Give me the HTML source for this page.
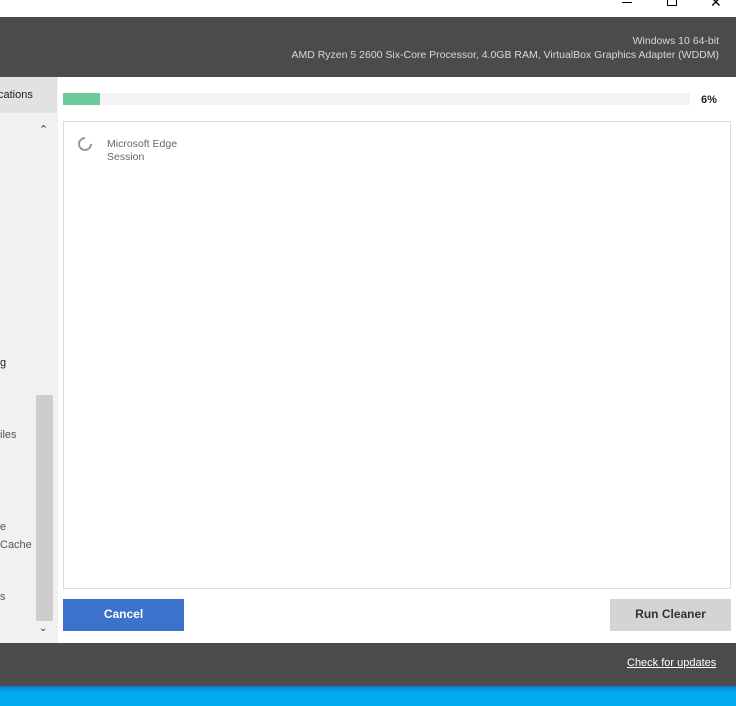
<!DOCTYPE html>
<html><head><style>
*{margin:0;padding:0;box-sizing:border-box}
body{width:736px;height:706px;overflow:hidden;background:#fff;font-family:"Liberation Sans",sans-serif;position:relative}
.a{position:absolute}
</style></head><body>
<div class="a" style="left:0;top:0;width:736px;height:17px;background:#fff"></div>
<div class="a" style="left:622px;top:2px;width:10px;height:1px;background:#000"></div>
<div class="a" style="left:667px;top:-4px;width:10px;height:10px;border:1px solid #000"></div>
<div class="a" style="left:710px;top:-6px;font-size:14px;color:#000">✕</div>
<div class="a" style="left:0;top:17px;width:736px;height:60px;background:#4b4b4b"></div>
<div class="a" style="right:17px;top:35px;font-size:10.5px;color:#d8d8d8;text-align:right;line-height:13.5px">Windows 10 64-bit<br>AMD Ryzen 5 2600 Six-Core Processor, 4.0GB RAM, VirtualBox Graphics Adapter (WDDM)</div>
<div class="a" style="left:0;top:77px;width:58px;height:566px;background:#f1f1f1"></div>
<div class="a" style="left:0;top:77px;width:57px;height:36px;background:#e2e2e2"></div>
<div class="a" style="left:-2px;top:89px;font-size:11px;color:#222">cations</div>
<div class="a" style="left:39px;top:123px;font-size:11px;color:#333">⌃</div>
<div class="a" style="left:0;top:357px;font-size:11px;color:#222">g</div>
<div class="a" style="left:0;top:429px;font-size:11px;color:#555">iles</div>
<div class="a" style="left:0;top:518px;font-size:11px;color:#555;line-height:18px">e<br>Cache</div>
<div class="a" style="left:0;top:591px;font-size:11px;color:#555">s</div>
<div class="a" style="left:36px;top:395px;width:17px;height:226px;background:#cdcdcd"></div>
<div class="a" style="left:39px;top:623px;font-size:10px;color:#333">⌄</div>
<div class="a" style="left:63px;top:93px;width:627px;height:12px;background:#f6f1f3"></div>
<div class="a" style="left:63px;top:93px;width:37px;height:12px;background:#6bcb9b"></div>
<div class="a" style="left:701px;top:94px;font-size:11px;font-weight:bold;color:#222">6%</div>
<div class="a" style="left:63px;top:121px;width:668px;height:468px;border:1px solid #dcdcdc"></div>
<div class="a" style="left:78px;top:137px;width:14px;height:14px;border:2px solid #999;border-right-color:transparent;border-radius:50%;transform:rotate(-45deg)"></div>
<div class="a" style="left:107px;top:138px;font-size:10.5px;color:#666;line-height:13px">Microsoft Edge<br>Session</div>
<div class="a" style="left:63px;top:599px;width:121px;height:32px;background:#3a72cc;color:#fff;font-weight:bold;font-size:12px;text-align:center;line-height:31px">Cancel</div>
<div class="a" style="left:610px;top:599px;width:121px;height:32px;background:#d4d4d4;color:#333;font-weight:bold;font-size:12px;text-align:center;line-height:31px">Run Cleaner</div>
<div class="a" style="left:0;top:643px;width:736px;height:43px;background:#4b4b4b"></div>
<div class="a" style="left:627px;top:657px;font-size:11px;color:#fff;text-decoration:underline">Check for updates</div>
<div class="a" style="left:0;top:686px;width:736px;height:20px;background:linear-gradient(#0a7fc0,#00aaee 30%,#00adef)"></div>
</body></html>
